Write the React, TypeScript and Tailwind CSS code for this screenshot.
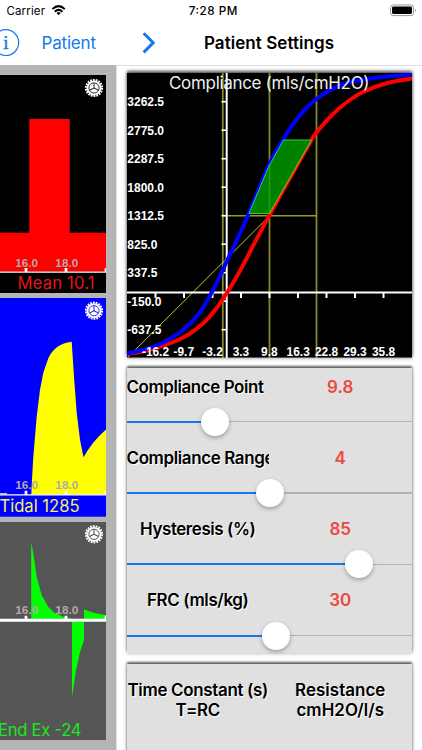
import type { ReactNode } from "react";

type Point = [number, number];

const sliders = [
  { label: "Compliance Point", value: "9.8", knob: 88, align: "justify-start", tracking: "tracking-[-0.45px]" },
  { label: "Compliance Range", value: "4", knob: 143, align: "justify-start", tracking: "tracking-[-0.4px]" },
  { label: "Hysteresis (%)", value: "85", knob: 232.5, align: "justify-center", tracking: "tracking-[-0.45px]" },
  { label: "FRC (mls/kg)", value: "30", knob: 149, align: "justify-center", tracking: "tracking-[-0.4px]" },
];

const yLabels = ["3262.5", "2775.0", "2287.5", "1800.0", "1312.5", "825.0", "337.5", "-150.0", "-637.5"];

const xLabels: [string, number][] = [
  ["-16.2", 155],
  ["-9.7", 183.3],
  ["-3.2", 212],
  ["3.3", 240.4],
  ["9.8", 268.8],
  ["16.3", 297.7],
  ["22.8", 326],
  ["29.3", 354.5],
  ["35.8", 383],
];

const inflation: Point[] = [
  [126, 354], [142, 351.5], [160, 346.5], [174, 341.5], [188, 334.5], [203, 323], [215, 309.5], [227, 292],
  [240.5, 269], [254, 243], [269, 215], [290, 177], [311, 140], [316, 132.5], [331, 115.5], [346.5, 102],
  [363.5, 91.5], [387, 83], [412, 78.5],
];

const deflation: Point[] = [
  [126, 353.5], [140, 350.5], [155, 346], [170, 338.5], [186, 327], [200, 311.5], [212, 291], [220, 275],
  [226.5, 261], [235, 243], [248.5, 213], [268, 166], [283, 139], [294, 122], [305, 109], [316, 99],
  [328, 91], [343, 84], [360, 80], [387, 76.5], [412, 74.5],
];

function smooth(points: Point[]) {
  let d = `M${points[0][0]} ${points[0][1]}`;
  for (let i = 0; i < points.length - 1; i++) {
    const a = points[i - 1] ?? points[i];
    const b = points[i];
    const c = points[i + 1];
    const e = points[i + 2] ?? c;
    d += ` C${b[0] + (c[0] - a[0]) / 6} ${b[1] + (c[1] - a[1]) / 6} ${c[0] - (e[0] - b[0]) / 6} ${c[1] - (e[1] - b[1]) / 6} ${c[0]} ${c[1]}`;
  }
  return d;
}

function Gear({ y, hole }: { y: number; hole: string }) {
  return (
    <g transform={`translate(94 ${y})`} fill="none">
      <circle r="8.1" stroke="#fff" strokeWidth="2" strokeDasharray="1.8 1.03" />
      <circle r="7.4" fill="#fff" />
      <circle r="5.1" stroke={hole} strokeWidth="1" />
      <path d="M0 0V-4.8M0 0L4.4 2.3M0 0L-4.4 2.3" stroke={hole} strokeWidth="1.1" />
    </g>
  );
}

function Wave({ top, tickY, children }: { top: number; tickY: number; children: ReactNode }) {
  return (
    <svg className="block h-[218.3px] w-[106px] shrink-0" viewBox={`0 ${top} 106 218.3`}>
      {children}
      <path d={`M26 ${tickY}v4M66 ${tickY}v4M106 ${tickY}v4`} stroke="#fff" strokeWidth="2.7" />
      <g fill="#b4a9a9" fontFamily="Liberation Sans, sans-serif" fontWeight="700" fontSize="11.8" textAnchor="middle">
        <text x="26.7" y={tickY - 1.3}>16.0</text>
        <text x="66.8" y={tickY - 1.3}>18.0</text>
      </g>
    </svg>
  );
}

function Sidebar() {
  return (
    <aside className="flex w-[116px] shrink-0 flex-col gap-[5px] bg-[#b5b5b5] pt-[10px]">
      <Wave top={75} tickY={268}>
        <rect y="75" width="106" height="219" fill="#000" />
        <path d="M0 271.5V232.7H29.3V119H69.7V232.7H106V271.5Z" fill="#f00" />
        <path d="M0 272.2H106" stroke="#fff" strokeWidth="1.2" />
        <text x="17.5" y="289.5" textLength="77" fontSize="16.6" fill="#e81414">Mean 10.1</text>
        <Gear y={88} hole="#333" />
      </Wave>
      <Wave top={298.3} tickY={491}>
        <rect y="298" width="106" height="219" fill="#00f" />
        <path
          d="M31.3 495L32 480L33.3 457L36.7 417L40 390L43.3 373L48.3 358.5Q55 344 71.7 342L74 377L76.7 413L80 440L83.5 457.5Q92 442 106 429.7V495Z"
          fill="#ff0"
        />
        <path d="M0 494H7" stroke="#ff8" />
        <path d="M0 495.2H106" stroke="#fff" strokeWidth="1.4" />
        <text x="-0.5" y="512.4" textLength="80" fontSize="16.6" fill="#f4f45a">Tidal 1285</text>
        <Gear y={311} hole="#33d" />
      </Wave>
      <Wave top={521.7} tickY={615.5}>
        <rect y="521" width="106" height="219" fill="#555" />
        <path
          d="M31.2 619V542L33.3 553L36.7 576.7L41.7 595L48.3 606.7L55 613L63.3 616.5L71.7 618.5V619ZM84 619V609.3Q94 613.5 106 615V619ZM72 621V696L73.5 688L76 670L80 651.7L84 640V621Z"
          fill="#0f0"
        />
        <path d="M0 620H106" stroke="#fff" strokeWidth="3" />
        <text x="-2" y="736" textLength="83.5" fontSize="16.6" fill="#1ce81c">End Ex -24</text>
        <Gear y={534} hole="#555" />
      </Wave>
    </aside>
  );
}

function ComplianceChart() {
  return (
    <svg
      className="block h-[285px] w-[285px] shrink-0 shadow-[0_-2px_3px_rgba(0,0,0,0.6),0_0_4px_rgba(0,0,0,0.4)]"
      viewBox="126.5 73 285 285"
    >
      <rect x="126" y="73" width="286" height="286" fill="#000" />
      <path d="M222.3 73V358M269 73V358M316 73V358" stroke="#88882a" strokeWidth="1.8" />
      <path d="M222 215.7H316" stroke="#99992c" strokeWidth="1.4" />
      <path d="M127 357.5L269 216" stroke="#d8d840" strokeWidth="0.9" />
      <g stroke="#fff" fill="none">
        <path d="M226.2 73V358" strokeWidth="2" />
        <path d="M126 292.5H412" strokeWidth="1.8" />
        {yLabels.map((label, i) => (
          <path key={label} d={`M221 ${101.7 + i * 28.5}h5`} strokeWidth="1.6" />
        ))}
        {xLabels.map(([label], i) => (
          <path key={label} d={`M${155 + i * 28.5} 293v5`} strokeWidth="2" />
        ))}
      </g>
      <path d={smooth(inflation)} fill="none" stroke="#f00" strokeWidth="4" />
      <path d={smooth(deflation)} fill="none" stroke="#00f" strokeWidth="4" />
      <path d="M248.5 213.5L268 167L283 140H311L290 177L269 213.5Z" fill="#008000" />
      <path d="M269 213V164.5" stroke="#229a12" strokeWidth="1.6" />
      <path d="M248.5 213.5L268 167L283 140" fill="none" stroke="#20c8a0" />
      <path d="M283 140H311M248.5 213.5H269" stroke="#30d030" />
      <path d="M311 140L290 177L269 213.5" fill="none" stroke="#a89a18" strokeWidth="1.3" />
      <g fill="#fff" fontFamily="Liberation Sans, sans-serif" fontWeight="700" fontSize="12">
        {yLabels.map((label, i) => (
          <text key={label} x="126.8" y={106 + i * 28.5}>{label}</text>
        ))}
        {xLabels.map(([label, x]) => (
          <text key={label} x={x} y="356" fontSize="11.9" textAnchor="middle">{label}</text>
        ))}
      </g>
      <text x="168.5" y="88.7" textLength="200.5" fontSize="17" fill="#eee">
        Compliance (mls/cmH2O)
      </text>
      <path d="M126 358H412" stroke="#ddd" strokeWidth="0.8" />
    </svg>
  );
}

function SliderRow({ label, value, knob, align, tracking }: (typeof sliders)[number]) {
  return (
    <div className="h-[71.25px]">
      <div className="flex h-[38px] items-center text-[17px] font-semibold">
        <div
          className={`flex w-[142.5px] overflow-hidden whitespace-nowrap [text-shadow:1px_1px_0_#fff] ${align} ${tracking}`}
        >
          {label}
        </div>
        <div className="w-[142.5px] text-center text-[#ee483c]">{value}</div>
      </div>
      <div className="relative flex h-[31px] items-center">
        <div className="h-[2px] bg-[#1478ee]" style={{ width: knob }} />
        <div className="h-[1.4px] flex-1 bg-[#b3b3b3]" />
        <div
          className="absolute top-[1.5px] h-7 w-7 rounded-full bg-white shadow-[0_2px_4px_rgba(0,0,0,0.3)]"
          style={{ left: knob - 14 }}
        />
      </div>
    </div>
  );
}

export default function App() {
  return (
    <div className="flex h-[750px] w-[422px] flex-col overflow-hidden bg-white font-['Inter',sans-serif] text-black">
      <header className="h-[65px] shrink-0">
        <svg className="block h-[65px] w-[422px]" viewBox="0 0 422 65">
          <text x="6.5" y="15.3" textLength="38.5" fontSize="11.5">Carrier</text>
          <g fill="none" stroke="#000" strokeWidth="2">
            <path d="M52.4 9.1Q58.6 3.2 64.8 9.1" />
            <path d="M54.8 11.7Q58.6 8.1 62.4 11.7" />
          </g>
          <path d="M56.5 13Q58.6 11.2 60.7 13L58.6 15.3Z" />
          <text x="188.8" y="15.3" textLength="48.5" fontSize="11.7" fontWeight="500">7:28 PM</text>
          <rect x="390.5" y="5" width="23" height="10.6" rx="2.8" fill="#fff" stroke="#999" />
          <rect x="392" y="6.6" width="20" height="7.4" rx="1.4" />
          <path d="M415 8.7q2 1.6 0 3.2z" fill="#999" />
          <circle cx="5.8" cy="42.6" r="12.9" fill="none" stroke="#1478e8" strokeWidth="1.2" />
          <text x="5.8" y="49" fontFamily="Liberation Serif, serif" fontSize="19" textAnchor="middle" fill="#1478e8" stroke="#1478e8" strokeWidth="0.4">
            i
          </text>
          <text x="41.5" y="49" textLength="54.5" fontSize="17" fill="#1478e8">Patient</text>
          <path d="M143.7 33.2L153.2 42.8L143.7 52.4" fill="none" stroke="#1478e8" strokeWidth="3" />
          <text x="204" y="49" textLength="130" fontSize="17" fontWeight="600">Patient Settings</text>
        </svg>
      </header>

      <div className="flex min-h-0 flex-1">
        <Sidebar />
        <main className="flex flex-1 flex-col gap-[10.3px] border-t border-l border-[#dedede] pt-[7px] pl-[9.5px]">
          <ComplianceChart />
          <section className="h-[285px] w-[285.5px] shrink-0 bg-[#e0e0e0] shadow-[0_-2px_2px_rgba(0,0,0,0.55),0_0_4px_rgba(0,0,0,0.35)]">
            {sliders.map((slider) => (
              <SliderRow key={slider.label} {...slider} />
            ))}
          </section>
          <section className="flex h-[120px] w-[285.5px] shrink-0 bg-[#e0e0e0] pt-[16px] text-center text-[17px] leading-[20px] font-semibold whitespace-nowrap shadow-[0_-2px_2px_rgba(0,0,0,0.55),0_0_4px_rgba(0,0,0,0.35)] [text-shadow:1px_1px_0_#fff]">
            <div className="w-[142.5px] tracking-[-0.35px]">
              Time Constant (s)
              <br />
              T=RC
            </div>
            <div className="w-[142.5px]">
              Resistance
              <br />
              cmH2O/l/s
            </div>
          </section>
        </main>
      </div>
    </div>
  );
}
